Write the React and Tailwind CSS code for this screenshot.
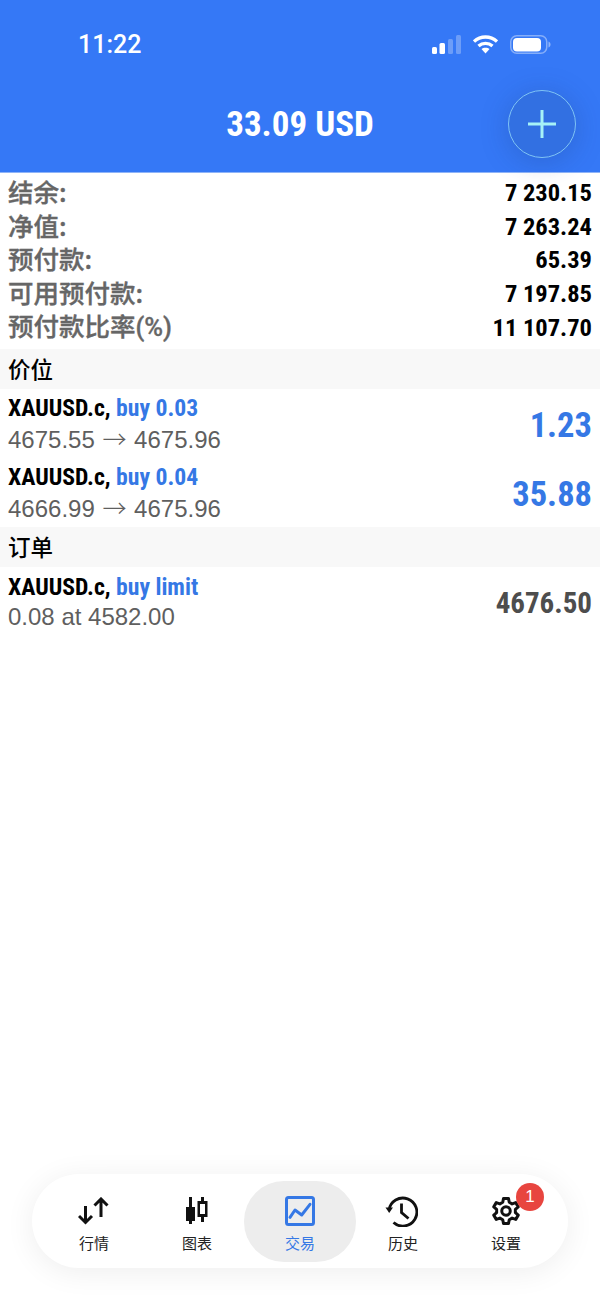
const cjk = "font-['Noto_Sans_CJK_SC',sans-serif]";
const narrow = "font-['Roboto',sans-serif] font-bold [font-stretch:75%]";

const summary = [
  ['结余:', '7 230.15'],
  ['净值:', '7 263.24'],
  ['预付款:', '65.39'],
  ['可用预付款:', '7 197.85'],
  [<>预付款比率<span className="font-['Roboto',sans-serif] font-medium [font-stretch:95%]">(%)</span></>, '11 107.70'],
];

function StatusIcons() {
  return (
    <div className="flex items-center">
      <svg width="30" height="19" viewBox="0 0 30 19">
        <rect x="0" y="12" width="5" height="7" rx="1.5" fill="#fff" />
        <rect x="7.500" y="8" width="5.500" height="11" rx="1.5" fill="#fff" />
        <rect x="16" y="4" width="5" height="15" rx="1.5" fill="#fff" fillOpacity="0.28" />
        <rect x="24" y="0" width="5" height="19" rx="1.5" fill="#fff" fillOpacity="0.28" />
      </svg>
      <svg width="25" height="19" viewBox="0 0 25 19" fill="none" className="ml-[11px]">
        <path d="M1 6.500C7.500 0.500 17.500 0.500 24 6.500" stroke="#fff" strokeWidth="3.300" />
        <path d="M5.500 11C9.500 7.500 15.500 7.500 19.500 11" stroke="#fff" strokeWidth="3.300" />
        <path d="M8.500 14C10.500 12.300 14.500 12.300 16.500 14L12.500 18.500Z" fill="#fff" />
      </svg>
      <svg width="41" height="19" viewBox="0 0 41 19" fill="none" className="ml-[12px]">
        <rect x="0.750" y="0.750" width="36" height="17.500" rx="6" stroke="#fff" strokeOpacity="0.4" strokeWidth="1.500" />
        <rect x="3" y="3" width="28" height="13.500" rx="4" fill="#fff" />
        <path d="M38.500 6.500v6c1.300-.6 2-1.700 2-3s-.7-2.400-2-3Z" fill="#fff" fillOpacity="0.45" />
      </svg>
    </div>
  );
}

function SectionHeader({ children }) {
  return (
    <div className={`flex h-10 items-center bg-[#f8f8f8] px-2 text-[22.5px] font-medium text-black ${cjk}`}>
      {children}
    </div>
  );
}

function TradeRow({ type, detail, value, valueClass }) {
  const [from, to] = detail.split(' → ');
  return (
    <div className="flex h-[69px] items-center justify-between px-2">
      <div>
        <div className={`text-[23.7px] leading-[31px] ${narrow}`}>
          <span className="text-black">XAUUSD.c, </span>
          <span className="text-[#3578e5]">{type}</span>
        </div>
        <div className="-mt-[2px] font-['Liberation_Sans',sans-serif] text-[24px] leading-[31px] text-[#5f5f5f]">
          {to ? (
            <>
              {from} <span className="mx-[1px] font-['Noto_Sans_CJK_SC',sans-serif] font-light">→</span> {to}
            </>
          ) : (
            detail
          )}
        </div>
      </div>
      <div className={`pt-1 ${narrow} ${valueClass}`}>{value}</div>
    </div>
  );
}

const MarketIcon = () => (
  <svg width="32" height="28" viewBox="0 0 32 28" fill="none" stroke="#111" strokeWidth="3">
    <path d="M7.500 9v17M1 19l6.500 6.500L14 19" />
    <path d="M23 20V2M16.500 8.500L23 2l6.500 6.500" />
  </svg>
);

const ChartIcon = () => (
  <svg width="24" height="28" viewBox="0 0 24 28" fill="#111">
    <rect x="4" y="0" width="3" height="27" />
    <rect x="1" y="10" width="9" height="14" />
    <rect x="16" y="0" width="3" height="25" />
    <rect x="12.500" y="4" width="10" height="16" />
    <rect x="15" y="7" width="5" height="10" fill="#fff" />
  </svg>
);

const TradeIcon = () => (
  <svg width="30" height="30" viewBox="0 0 30 30" fill="none" stroke="#3578e5" strokeWidth="3">
    <rect x="1.500" y="1.500" width="27" height="27" rx="2" />
    <path d="M5 21.300L10 14l6.700 5L25 8.300" strokeLinecap="round" strokeLinejoin="round" />
  </svg>
);

const HistoryIcon = () => (
  <svg width="33" height="31" viewBox="0 0 33 31" fill="none" stroke="#111" strokeWidth="2.800" className="mr-[3px]">
    <path d="M4 14A14 14 0 1 1 8.500 26.500" />
    <path d="M0.500 11.500h7.500L4.200 17Z" fill="#111" stroke="none" />
    <path d="M16.500 7.500V16.500L23.500 22.500" />
  </svg>
);

const GearIcon = () => (
  <svg width="30" height="30" viewBox="0 0 24 24" fill="none" stroke="#111" strokeWidth="2.400" strokeLinejoin="round">
    <path d="M10 2h4l.6 3 2.300 1.300 2.900-1 2 3.400-2.300 2v2.600l2.300 2-2 3.400-2.900-1-2.300 1.300-.6 3h-4l-.6-3-2.300-1.300-2.900 1-2-3.400 2.300-2v-2.600l-2.300-2 2-3.400 2.900 1L9.400 5Z" />
    <circle cx="12" cy="12" r="3.400" />
  </svg>
);

function NavItem({ icon, label, active, badge }) {
  return (
    <div className={`relative flex h-[81px] flex-col items-center justify-center pt-1 ${active ? '-mx-[4.5px] w-[112px] rounded-[40px] bg-[#ededed]' : 'w-[103px]'}`}>
      <div className="flex h-[34px] items-center justify-center">{icon}</div>
      <div className={`mt-[6px] text-[15px] leading-[18px] ${cjk} ${active ? 'text-[#3578e5]' : 'text-[#222]'}`}>{label}</div>
      {badge && (
        <div className="absolute left-[61.5px] top-[2.500px] flex h-7 w-7 items-center justify-center rounded-full bg-[#e8453f] font-['Liberation_Sans',sans-serif] text-[17px] text-white">
          {badge}
        </div>
      )}
    </div>
  );
}

export default function App() {
  return (
    <div className="relative flex h-[1301px] w-[600px] flex-col overflow-hidden bg-white">
      <header className="h-[173px] border-b border-[#8fb4f8] bg-[#3578f6]">
        <div className="flex h-[88px] items-center justify-between pl-[78px] pr-[49px] pt-[1px]">
          <span className="font-['Roboto',sans-serif] text-[25px] font-medium text-white">11:22</span>
          <StatusIcons />
        </div>
        <div className={`mt-[14px] text-center text-[35px] leading-[46px] text-white ${narrow}`}>33.09 USD</div>
      </header>

      <div className="absolute left-[508px] top-[90px] flex h-[68px] w-[68px] items-center justify-center rounded-full border border-[#7fc4f5] bg-[#3270e2] shadow-[0_4px_28px_rgba(30,60,130,0.28)]">
        <svg width="30" height="30" viewBox="0 0 30 30" stroke="#a6f2f7" strokeWidth="3">
          <path d="M15 1v28M1 15h28" />
        </svg>
      </div>

      <section className="flex h-[176px] flex-col px-2 pt-[3px]">
        {summary.map(([label, value], i) => (
          <div key={i} className="flex h-[33.6px] items-center justify-between">
            <span className={`-mt-[3px] text-[25.5px] font-medium leading-[30px] text-[#666] [-webkit-text-stroke:0.35px_#666] ${cjk}`}>{label}</span>
            <span className={`pt-[1px] text-[24.5px] leading-[30px] text-black ${narrow}`}>{value}</span>
          </div>
        ))}
      </section>

      <SectionHeader>价位</SectionHeader>
      <TradeRow type="buy 0.03" detail="4675.55 → 4675.96" value="1.23" valueClass="text-[34.5px] text-[#3578e5]" />
      <TradeRow type="buy 0.04" detail="4666.99 → 4675.96" value="35.88" valueClass="text-[34.5px] text-[#3578e5]" />
      <SectionHeader>订单</SectionHeader>
      <TradeRow type="buy limit" detail="0.08 at 4582.00" value="4676.50" valueClass="text-[29px] text-[#4d4d4d]" />

      <nav className="absolute left-[32px] top-[1174px] flex h-[94px] w-[536px] items-center justify-center rounded-[47px] bg-white shadow-[0_4px_30px_rgba(0,0,0,0.07)]">
        <NavItem icon={<MarketIcon />} label="行情" />
        <NavItem icon={<ChartIcon />} label="图表" />
        <NavItem icon={<TradeIcon />} label="交易" active />
        <NavItem icon={<HistoryIcon />} label="历史" />
        <NavItem icon={<GearIcon />} label="设置" badge="1" />
      </nav>
    </div>
  );
}
